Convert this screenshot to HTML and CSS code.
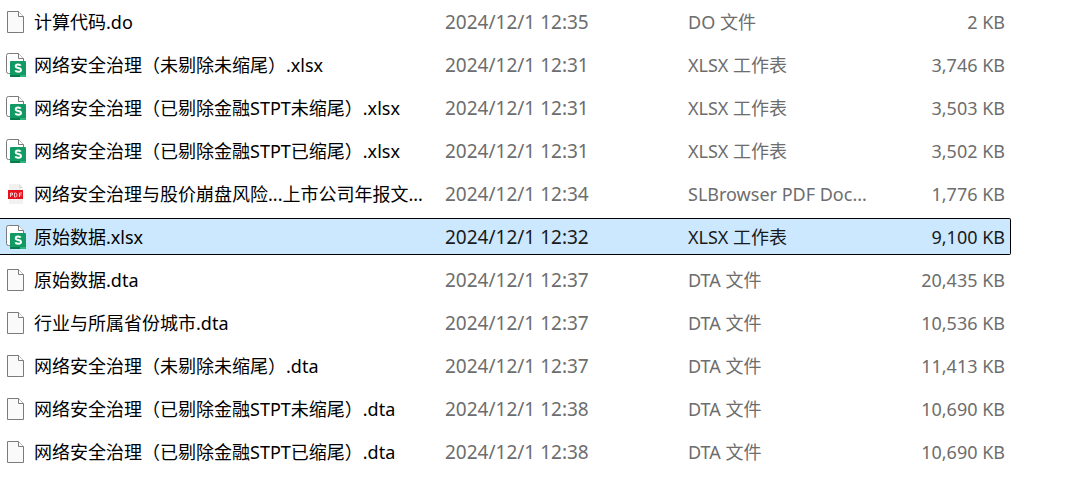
FILE: index.html
```html
<!DOCTYPE html>
<html lang="zh-CN">
<head>
  <meta charset="utf-8">
  <meta name="viewport" content="width=device-width,initial-scale=1">
  <title>原始数据</title>
  <link rel="stylesheet" href="styles.css">
</head>
<body>

  <!-- icônes partagées -->
  <svg class="defs" aria-hidden="true">
    <symbol id="file" viewBox="0 0 22 25">
      <path d="M2.500 2.500h11l5 5v16h-16z" fill="#fafafa" stroke="#7b7b7b"/>
      <path d="M13.500 2.500v5h5" fill="#fff" stroke="#7b7b7b"/>
    </symbol>
    <symbol id="sheet" viewBox="0 0 22 25">
      <path d="M3.500 1.500h10l5 5v15h-15a2 2 0 0 1-2-2v-16a2 2 0 0 1 2-2z" fill="#fff" stroke="#7b7b7b"/>
      <path d="M13.500 1.500v5h5" fill="#fff" stroke="#7b7b7b"/>
      <rect x="5" y="9" width="16" height="16" rx="1" fill="#119a63"/>
      <path d="M5 23h16v1a1 1 0 0 1-1 1H6a1 1 0 0 1-1-1z" fill="#087a4b"/>
      <path d="M15 23h6v1a1 1 0 0 1-1 1h-5z" fill="#2eb67f"/>
      <path d="M15.700 13.700C15 12.200 10.700 12 10.700 14.200c0 2.400 5.300 1.200 5.300 3.700 0 2.500-4.900 2.300-5.700.5" fill="none" stroke="#fff" stroke-width="1.900"/>
    </symbol>
    <symbol id="pdf" viewBox="0 0 22 25">
      <path d="M4 3h10l4 4v16H4z" fill="#f1f1f1"/>
      <path d="M14 3v4h4z" fill="#ddd"/>
      <rect x="3" y="9" width="15" height="9" fill="#e5131d"/>
      <path d="M5.500 16v-4h2v2h-2M9.500 12h1q1.500 0 1.500 2t-1.500 2h-1zM14.500 16v-4h2.500M14.500 14h2" fill="none" stroke="#ffd9db" stroke-width=".9"/>
    </symbol>
  </svg>

  <table class="files">
    <tbody>
      <tr>
        <td class="name"><svg><use href="#file"/></svg><span>计算代码.do</span></td>
        <td class="date">2024/12/1 12:35</td>
        <td class="type">DO 文件</td>
        <td class="size">2 KB</td>
      </tr>
      <tr>
        <td class="name"><svg><use href="#sheet"/></svg><span>网络安全治理（未剔除未缩尾）.xlsx</span></td>
        <td class="date">2024/12/1 12:31</td>
        <td class="type">XLSX 工作表</td>
        <td class="size">3,746 KB</td>
      </tr>
      <tr>
        <td class="name"><svg><use href="#sheet"/></svg><span>网络安全治理（已剔除金融STPT未缩尾）.xlsx</span></td>
        <td class="date">2024/12/1 12:31</td>
        <td class="type">XLSX 工作表</td>
        <td class="size">3,503 KB</td>
      </tr>
      <tr>
        <td class="name"><svg><use href="#sheet"/></svg><span>网络安全治理（已剔除金融STPT已缩尾）.xlsx</span></td>
        <td class="date">2024/12/1 12:31</td>
        <td class="type">XLSX 工作表</td>
        <td class="size">3,502 KB</td>
      </tr>
      <tr>
        <td class="name"><svg><use href="#pdf"/></svg><span>网络安全治理与股价崩盘风险...上市公司年报文...</span></td>
        <td class="date">2024/12/1 12:34</td>
        <td class="type">SLBrowser PDF Doc...</td>
        <td class="size">1,776 KB</td>
      </tr>
      <tr class="selected">
        <td class="name"><svg><use href="#sheet"/></svg><span>原始数据.xlsx</span></td>
        <td class="date">2024/12/1 12:32</td>
        <td class="type">XLSX 工作表</td>
        <td class="size">9,100 KB</td>
      </tr>
      <tr>
        <td class="name"><svg><use href="#file"/></svg><span>原始数据.dta</span></td>
        <td class="date">2024/12/1 12:37</td>
        <td class="type">DTA 文件</td>
        <td class="size">20,435 KB</td>
      </tr>
      <tr>
        <td class="name"><svg><use href="#file"/></svg><span>行业与所属省份城市.dta</span></td>
        <td class="date">2024/12/1 12:37</td>
        <td class="type">DTA 文件</td>
        <td class="size">10,536 KB</td>
      </tr>
      <tr>
        <td class="name"><svg><use href="#file"/></svg><span>网络安全治理（未剔除未缩尾）.dta</span></td>
        <td class="date">2024/12/1 12:37</td>
        <td class="type">DTA 文件</td>
        <td class="size">11,413 KB</td>
      </tr>
      <tr>
        <td class="name"><svg><use href="#file"/></svg><span>网络安全治理（已剔除金融STPT未缩尾）.dta</span></td>
        <td class="date">2024/12/1 12:38</td>
        <td class="type">DTA 文件</td>
        <td class="size">10,690 KB</td>
      </tr>
      <tr>
        <td class="name"><svg><use href="#file"/></svg><span>网络安全治理（已剔除金融STPT已缩尾）.dta</span></td>
        <td class="date">2024/12/1 12:38</td>
        <td class="type">DTA 文件</td>
        <td class="size">10,690 KB</td>
      </tr>
    </tbody>
  </table>

</body>
</html>
```

FILE: styles.css
```css
:root {
  --text:      #000000;
  --muted:     #6d6d6d;
  --selected:  #cce8ff;
}
* { margin:0; padding:0; box-sizing:border-box; }
body {
  font-family:"Noto Sans","Noto Sans CJK SC",sans-serif;
  font-size:18px;
  line-height:24px;
  background:#fff;
  color:var(--text);
}
.defs { display:none; }
.files, .files tbody { display:block; }
.files { padding:3px 54px 0 0; }
.files tr {
  display:grid;
  grid-template-columns:minmax(0,445fr) minmax(0,243fr) minmax(0,178fr) minmax(0,144fr);
  align-items:center;
  height:37px;
  margin-bottom:6px;
  border:1px solid transparent;
  border-left:none;
  border-radius:0 2px 2px 0;
}
.files td {
  color:var(--muted);
  white-space:nowrap;
}
.files .name {
  display:flex;
  align-items:center;
  gap:7px;
  padding-left:5px;
  color:var(--text);
}
.name svg { width:22px; height:25px; flex:none; }
.files .date { font-size:19px; }
.files .size { padding-right:5px; text-align:right; }
.files .selected {
  background:var(--selected);
  border-color:#000;
}
.files .selected td { color:#1a1a1a; }
.files .selected .name { color:var(--text); }
```
